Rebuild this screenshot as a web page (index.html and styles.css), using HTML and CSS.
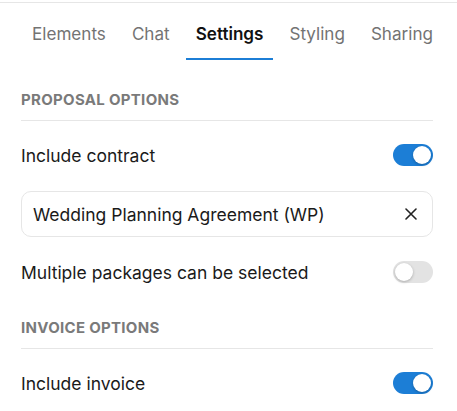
FILE: index.html
```html
<!DOCTYPE html>
<html lang="en">
<head>
  <meta charset="UTF-8" />
  <meta name="viewport" content="width=device-width, initial-scale=1.0"/>
  <title>Form Settings</title>
  <link rel="stylesheet" href="styles.css">
</head>
<body>
  <div class="panel">
    <nav class="tabs">
      <div class="tab">Elements</div>
      <div class="tab">Chat</div>
      <div class="tab active">Settings</div>
      <div class="tab">Styling</div>
      <div class="tab">Sharing</div>
    </nav>

    <div class="content">
      <h2 class="section-title">Proposal options</h2>
      <div class="options">
        <div class="row">
          <span>Include contract</span>
          <label class="switch on"><span class="knob"></span></label>
        </div>
        <div class="select-box">
          <span>Wedding Planning Agreement (WP)</span>
          <svg class="clear" width="12" height="12" viewBox="0 0 12 12">
            <path d="M1 1 L11 11 M11 1 L1 11" stroke="#222" stroke-width="1.6" stroke-linecap="round"/>
          </svg>
        </div>
        <div class="row">
          <span>Multiple packages can be selected</span>
          <label class="switch"><span class="knob"></span></label>
        </div>
      </div>

      <h2 class="section-title">Invoice options</h2>
      <div class="options">
        <div class="row">
          <span>Include invoice</span>
          <label class="switch on"><span class="knob"></span></label>
        </div>
      </div>
    </div>
  </div>
</body>
</html>
```

FILE: styles.css
```css
body {
  margin: 0;
  font-family: Inter, 'Noto Sans', sans-serif;
  background: #fff;
  color: #1a1a1a;
  overflow: hidden;
}

.panel {
  margin-top: 2px;
  border-top: 1px solid #e6e6e6;
}

.tabs {
  display: flex;
  gap: 6px;
  padding: 0 0 0 22px;
  white-space: nowrap;
}

.tab {
  padding: 19px 10px 12px;
  font-size: 17.1px;
  line-height: 24px;
  color: #737373;
  border-bottom: 2px solid transparent;
}

.tab.active {
  color: #111;
  font-weight: 600;
  border-bottom-color: #1c7ed6;
}

.content {
  padding: 0 24px 0 21px;
}

.section-title {
  margin: 30px 0 0;
  padding-bottom: 10px;
  border-bottom: 1px solid #e6e6e6;
  font-size: 15px;
  line-height: 20px;
  font-weight: 700;
  text-transform: uppercase;
  letter-spacing: 0.3px;
  color: #7a7a7a;
}

.section-title + .options + .section-title {
  margin-top: 35px;
}

.options {
  display: flex;
  flex-direction: column;
  gap: 24px;
  padding-top: 23px;
}

.row {
  display: flex;
  align-items: center;
  justify-content: space-between;
  height: 22px;
  font-size: 17.5px;
}

.switch {
  position: relative;
  width: 40px;
  height: 22px;
  border-radius: 11px;
  background: #e3e3e3;
  flex-shrink: 0;
}

.switch.on {
  background: #1c7ed6;
}

.knob {
  position: absolute;
  top: 2px;
  left: 2px;
  width: 18px;
  height: 18px;
  border-radius: 50%;
  background: #fff;
  box-shadow: 0 1px 3px rgba(0, 0, 0, 0.25);
}

.switch.on .knob {
  left: 20px;
}

.select-box {
  display: flex;
  align-items: center;
  justify-content: space-between;
  height: 44px;
  margin-top: 1px;
  padding: 0 15px 0 11px;
  border: 1px solid #e6e6e6;
  border-radius: 10px;
  font-size: 17.5px;
}
```
